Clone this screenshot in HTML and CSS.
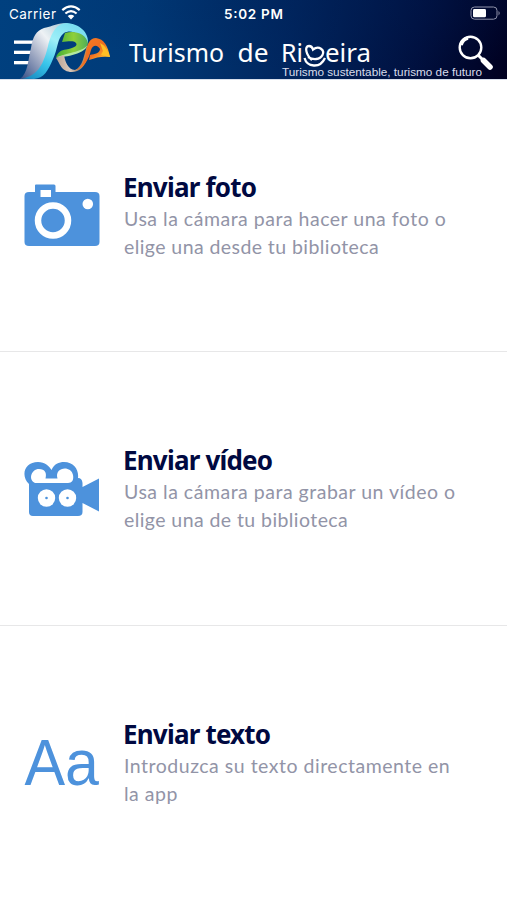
FILE: index.html
```html
<!DOCTYPE html>
<html lang="es">
<head>
<meta charset="utf-8">
<title>Turismo de Ribeira</title>
<link rel="stylesheet" href="styles.css">
</head>
<body>
<header class="header">
<svg class="banner" viewBox="0 0 507 79" role="img" aria-label="Turismo de Ribeira">
  <defs>
    <linearGradient id="silver" x1="0" y1="1" x2="1" y2="0"><stop offset="0" stop-color="#344d85"/><stop offset=".4" stop-color="#a8b1c8"/><stop offset=".65" stop-color="#eef2f5"/><stop offset="1" stop-color="#a2c4d2"/></linearGradient>
    <linearGradient id="cyan" x1="0" y1="1" x2=".7" y2="0"><stop offset="0" stop-color="#1582ba"/><stop offset=".35" stop-color="#38c5eb"/><stop offset=".7" stop-color="#9eeff8"/><stop offset="1" stop-color="#7bdff0"/></linearGradient>
    <linearGradient id="green" x1="0" y1="0" x2="1" y2="0"><stop offset="0" stop-color="#43ad35"/><stop offset=".55" stop-color="#8fd03a"/><stop offset="1" stop-color="#4fae58"/></linearGradient>
    <linearGradient id="sand" x1="0" y1="0" x2="1" y2="0"><stop offset="0" stop-color="#bba392"/><stop offset=".4" stop-color="#d9c8bb"/><stop offset=".65" stop-color="#9d8a78"/><stop offset="1" stop-color="#ef8b28"/></linearGradient>
    <linearGradient id="orange" x1="0" y1="0" x2="1" y2="1"><stop offset="0" stop-color="#f58123"/><stop offset=".5" stop-color="#ee6c22"/><stop offset=".75" stop-color="#ffc22e"/><stop offset="1" stop-color="#f3a11b"/></linearGradient>
  </defs>
  <g fill="#fff"><rect x="14" y="40.5" width="19" height="3.3"/><rect x="14" y="50.7" width="17" height="3.3"/><rect x="14" y="61" width="15" height="3.3"/></g>
  <text class="status" x="9" y="18.5" textLength="47">Carrier</text>
  <g fill="none" stroke="#fff" stroke-width="2.2"><path d="M62.3 10.2Q71 2.7 79.7 10.2"/><path d="M65.4 13.5Q71 8.8 76.6 13.5"/></g>
  <path d="M67.7 16Q71 13.3 74.3 16L71 19.5Z" fill="#fff"/>
  <text class="status clock" x="224" y="18.5" textLength="59">5:02 PM</text>
  <rect x="471" y="7" width="26" height="12.2" rx="3.5" fill="none" stroke="#9194ac"/>
  <rect x="473" y="9" width="13" height="8.3" rx="1.4" fill="#fff"/>
  <path d="M498.5 11Q501 13.2 498.5 15.4Z" fill="#85879f"/>
  <path d="M20 79C28 73 28 60 31 48C33 36 36 31 44 28C53 26 58 23 67 23L60 36C52 50 49 70 34 78Z" fill="url(#silver)"/>
  <path d="M22 78.500C39 76 44 62 48 46C51 34 56 23 67 23C79 24 89 32 88 43L84 42C79 33 71 29 64 33C57 38 58 49 53 59C48 71 44 78 34 79Z" fill="url(#cyan)"/>
  <path d="M65 33C74 30 86 33 88 43C86 52 71 54 56 57.500C58 52 61 50 66 49.500C74 48 78 46 76 43C73 40 67 42 62 42Z" fill="url(#green)"/>
  <path d="M88 44C84 52 69 52 56 57.500C66 57 86 54 88 44Z" fill="#b3e9a0"/>
  <path d="M56 58L64 55C65 61 68 70 75 70C83 67 84 54 87 46L91 46C88 57 85 72 72 72C61 72 60 63 56 58Z" fill="url(#sand)"/>
  <path d="M86 54C87 43 90 38 96 38C104 39 108 46 110 57C103 56 97 57 89 60L90 55C95 54 100 53 100 49C98 45 93 44 91 50C89 59 84 68 75 71C82 66 84 62 86 54Z" fill="url(#orange)"/>
  <path d="M100 43C106 46 108 51 110 57L101 55L103 51Z" fill="#ffbf25"/>
  <text class="brand" x="129" y="62" textLength="95" lengthAdjust="spacingAndGlyphs">Turismo</text>
  <text class="brand" x="237.500" y="62" textLength="31" lengthAdjust="spacingAndGlyphs">de</text>
  <text class="brand" x="281" y="62" textLength="22" lengthAdjust="spacingAndGlyphs">Ri</text>
  <text class="brand" x="325" y="62" textLength="46" lengthAdjust="spacingAndGlyphs">eira</text>
  <path d="M312 60C306 55 304 46 309 46Q312 46 313 49.500C319 45 325 50 322.500 55C320 60 313 60 308 57M304.500 58C307 67 320 69 325 58" fill="none" stroke="#fff" stroke-width="2.3"/>
  <text class="tagline" x="282" y="76.4" textLength="200" lengthAdjust="spacingAndGlyphs">Turismo sustentable, turismo de futuro</text>
  <circle cx="470.5" cy="47.5" r="10.8" fill="none" stroke="#fff" stroke-width="2.4"/>
  <path d="M461 45Q463 39 468 38" fill="none" stroke="#fff" stroke-width="3.6"/>
  <path d="M478 55L483 60" stroke="#fff" stroke-width="3"/><path d="M483.5 60.5L490 67" stroke="#fff" stroke-width="5.6" stroke-linecap="round"/>
</svg>
</header>
<main class="options">
  <section class="option">
    <svg class="icon" viewBox="0 0 76 64" aria-hidden="true"><path fill="#4d92dc" fill-rule="evenodd" d="M11 8V1.5Q11 .5 12 .5H30Q31.500 .5 31.500 2V8H71Q75.500 8 75.500 12V58Q75.500 62 71 62H5Q.5 62 .5 58V12Q.5 8 5 8ZM16.500 6V13H27V6Z"/><circle cx="29" cy="36.500" r="15" fill="none" stroke="#fff" stroke-width="6.500"/><circle cx="63.800" cy="20" r="5.300" fill="#fff"/></svg>
    <div class="copy"><h2>Enviar foto</h2><p>Usa la cámara para hacer una foto o<br><span class="tight">elige una desde tu biblioteca</span></p></div>
  </section>
  <section class="option">
    <svg class="icon" viewBox="0 0 76 64" aria-hidden="true"><path fill="#4d92dc" d="M5 27C-4 18 1 5 14 5C21 5 25 9 27.500 13C30 7 35 5 40 5C50 5 55 13 54 21Q58 21 58.500 26V30L75 21.500V54.500L58.500 46V55Q58.500 59 54 59H9Q5 59 5 55Z"/><path fill="#fff" d="M11 26C4 23 7 12 15 12C21 12 23 16 21.500 21.500H33.500C30 10 47 8 49 18C50 23 48 26 44 26Z"/><circle cx="22.500" cy="41" r="8.700" fill="#fff"/><circle cx="43.500" cy="41" r="8.700" fill="#fff"/><circle cx="22.500" cy="41" r="1.300" fill="#4d92dc"/><circle cx="43.500" cy="41" r="1.300" fill="#4d92dc"/></svg>
    <div class="copy"><h2>Enviar vídeo</h2><p>Usa la cámara para grabar un vídeo o<br><span class="tight">elige una de tu biblioteca</span></p></div>
  </section>
  <section class="option">
    <svg class="icon" viewBox="0 0 76 64" aria-hidden="true"><text class="letters" x=".5" y="53.500" textLength="74.500" lengthAdjust="spacingAndGlyphs">Aa</text></svg>
    <div class="copy"><h2>Enviar texto</h2><p>Introduzca su texto directamente en<br>la app</p></div>
  </section>
</main>
</body>
</html>
```
FILE: styles.css
```css
* { box-sizing: border-box; }
body { margin: 0; background: #fff; }
.header { height: 79px; background: radial-gradient(ellipse at 65% 0, rgba(0,29,83,.3), transparent 65%), linear-gradient(100deg, #00407f 0%, #003b79 28%, #00265f 57%, #00103f 82%, #000020 100%); box-shadow: 0 1px #d7dfec; }
.banner { display: block; width: 507px; height: 79px; }
.status { font: 13.5px Inter, sans-serif; fill: #fff; }
.clock { font-weight: 600; }
.brand { font: 26px "Noto Sans", sans-serif; fill: #fff; }
.tagline { font: 11.5px "Liberation Sans", sans-serif; fill: #d8ddec; }
.options { display: grid; grid-template-rows: 273px 274px 274px; }
.option { display: flex; align-items: flex-start; padding: 91px 24px 0; border-bottom: 1px solid #e7e7e8; }
.option:last-child { border: 0; }
.icon { width: 76px; height: 64px; margin-top: 14px; flex: none; overflow: visible; }
.copy { margin-left: 23px; white-space: nowrap; }
h2 { margin: 0; font: 700 26px/34px "Noto Sans", sans-serif; color: #000941; letter-spacing: -.8px; }
p { margin: 1px 0 0; padding-left: 1px; font: 19.5px/27.5px Lato, sans-serif; color: #9294a7; letter-spacing: .51px; }
.tight { letter-spacing: .42px; }
.letters { font: 65px "Liberation Sans", sans-serif; fill: #4d92dc; }
```
